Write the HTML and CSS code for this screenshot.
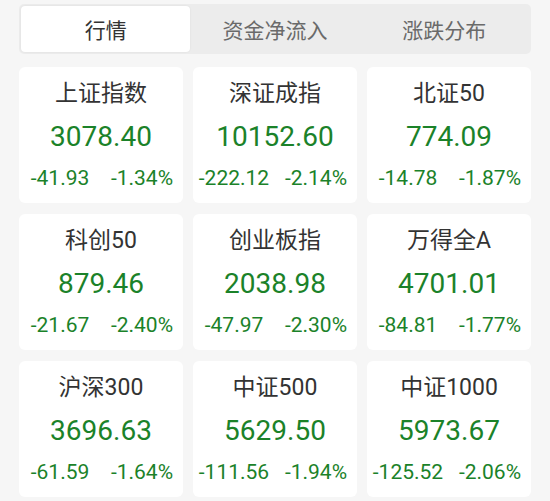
FILE: index.html
```html
<!DOCTYPE html>
<html lang="zh-CN">
<head>
<meta charset="utf-8">
<link rel="stylesheet" href="styles.css">
</head>
<body>
<div class="page">
  <div class="tabs">
    <div class="tab active">行情</div>
    <div class="tab">资金净流入</div>
    <div class="tab">涨跌分布</div>
  </div>
  <div class="grid">
    <div class="card"><div class="name">上证指数</div><div class="value">3078.40</div><div class="chg"><span>-41.93</span><span>-1.34%</span></div></div>
    <div class="card"><div class="name">深证成指</div><div class="value">10152.60</div><div class="chg"><span>-222.12</span><span>-2.14%</span></div></div>
    <div class="card"><div class="name">北证50</div><div class="value">774.09</div><div class="chg"><span>-14.78</span><span>-1.87%</span></div></div>
    <div class="card"><div class="name">科创50</div><div class="value">879.46</div><div class="chg"><span>-21.67</span><span>-2.40%</span></div></div>
    <div class="card"><div class="name">创业板指</div><div class="value">2038.98</div><div class="chg"><span>-47.97</span><span>-2.30%</span></div></div>
    <div class="card"><div class="name">万得全A</div><div class="value">4701.01</div><div class="chg"><span>-84.81</span><span>-1.77%</span></div></div>
    <div class="card"><div class="name">沪深300</div><div class="value">3696.63</div><div class="chg"><span>-61.59</span><span>-1.64%</span></div></div>
    <div class="card"><div class="name">中证500</div><div class="value">5629.50</div><div class="chg"><span>-111.56</span><span>-1.94%</span></div></div>
    <div class="card"><div class="name">中证1000</div><div class="value">5973.67</div><div class="chg"><span>-125.52</span><span>-2.06%</span></div></div>
  </div>
</div>
</body>
</html>
```

FILE: styles.css
```css
* { box-sizing: border-box; }
html, body {
  margin: 0;
  padding: 0;
  background: #f6f6f6;
}
body {
  font-family: Roboto, "Noto Sans CJK SC", sans-serif;
  width: 550px;
  height: 501px;
  overflow: hidden;
}
.page {
  padding: 4px 19px 0 19px;
}
.tabs {
  display: grid;
  grid-template-columns: 1fr 1fr 1fr;
  height: 50px;
  padding: 2px;
  background: #ececec;
  border-radius: 5px;
}
.tab {
  display: flex;
  align-items: center;
  justify-content: center;
  font-size: 21px;
  color: #6a6a6a;
  border-radius: 4px;
}
.tab.active {
  background: #ffffff;
  color: #333333;
  box-shadow: 0 0 2px rgba(0, 0, 0, 0.08);
}
.grid {
  margin-top: 13px;
  display: grid;
  grid-template-columns: repeat(3, 1fr);
  grid-auto-rows: 136px;
  column-gap: 10px;
  row-gap: 11px;
}
.card {
  background: #ffffff;
  border-radius: 6px;
  padding-top: 12px;
  text-align: center;
}
.name {
  font-size: 23px;
  line-height: 30px;
  color: #333333;
}
.value {
  font-size: 28px;
  line-height: 52px;
  padding-top: 2px;
  color: #1b8229;
}
.chg {
  display: grid;
  grid-template-columns: 1fr 1fr;
  font-size: 21px;
  line-height: 30px;
  color: #1b8229;
}
```
